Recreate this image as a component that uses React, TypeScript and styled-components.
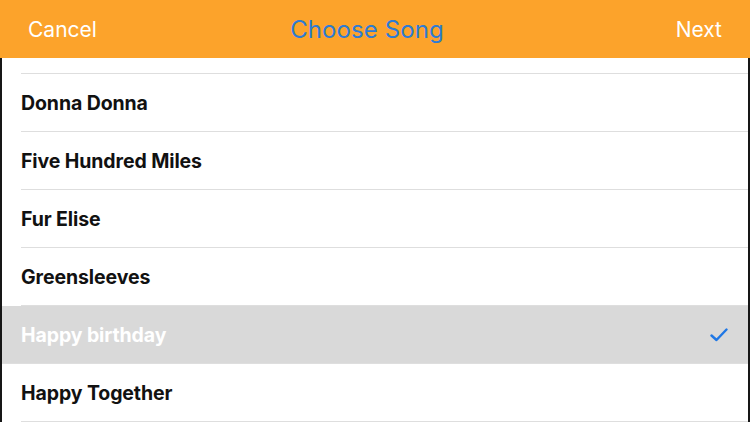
import React from "react";
import styled, { createGlobalStyle } from "styled-components";

const Global = createGlobalStyle`
  html, body { margin: 0; padding: 0; background: #fff; }
  body { font-family: Inter, "Noto Sans", sans-serif; width: 750px; height: 422px; overflow: hidden; }
`;

const Screen = styled.div`
  width: 750px;
  height: 422px;
  display: flex;
  flex-direction: column;
  overflow: hidden;
`;

const Header = styled.header`
  height: 58px;
  flex: none;
  background: #fca32b;
  display: grid;
  grid-template-columns: 1fr auto 1fr;
  align-items: center;
  padding: 0 28px;
  box-sizing: border-box;
`;

const NavButton = styled.span<{ $align: "left" | "right" }>`
  color: #fff;
  font-size: 21px;
  font-weight: 400;
  justify-self: ${(p) => (p.$align === "left" ? "start" : "end")};
`;

const Title = styled.h1`
  margin: 0 16px 0 0;
  color: #2e7bd4;
  font-size: 24px;
  font-weight: 400;
  letter-spacing: 0.1px;
`;

const List = styled.div`
  flex: 1;
  display: flex;
  flex-direction: column;
  border-left: 2px solid #161616;
  border-right: 2px solid #161616;
`;

const Row = styled.div<{ $selected?: boolean; $h?: number }>`
  height: ${(p) => p.$h ?? 58}px;
  flex: none;
  box-sizing: border-box;
  display: flex;
  align-items: center;
  padding-left: 19px;
  padding-right: 20px;
  background: ${(p) => (p.$selected ? "#d9d9d9" : "#fff")};
  position: relative;
  &::after {
    content: "";
    position: absolute;
    left: ${(p) => (p.$selected ? 0 : 19)}px;
    right: 0;
    bottom: 0;
    height: 1px;
    background: #dedede;
  }
`;

const Label = styled.span<{ $selected?: boolean }>`
  flex: 1;
  font-size: 19.5px;
  font-weight: 700;
  letter-spacing: -0.1px;
  color: ${(p) => (p.$selected ? "#fff" : "#111")};
`;

const Check = () => (
  <svg width="18" height="14" viewBox="0 0 18 14" fill="none">
    <path d="M1.5 7.5 L6.5 12 L16.5 1.5" stroke="#1f77e5" strokeWidth="2.4" strokeLinecap="round" strokeLinejoin="round" />
  </svg>
);

const songs = ["Donna Donna", "Five Hundred Miles", "Fur Elise", "Greensleeves", "Happy birthday", "Happy Together"];
const selected = "Happy birthday";

export default function App() {
  return (
    <Screen>
      <Global />
      <Header>
        <NavButton $align="left">Cancel</NavButton>
        <Title>Choose Song</Title>
        <NavButton $align="right">Next</NavButton>
      </Header>
      <List>
        <Row $h={16} />
        {songs.map((s) => (
          <Row key={s} $selected={s === selected}>
            <Label $selected={s === selected}>{s}</Label>
            {s === selected && <Check />}
          </Row>
        ))}
      </List>
    </Screen>
  );
}
